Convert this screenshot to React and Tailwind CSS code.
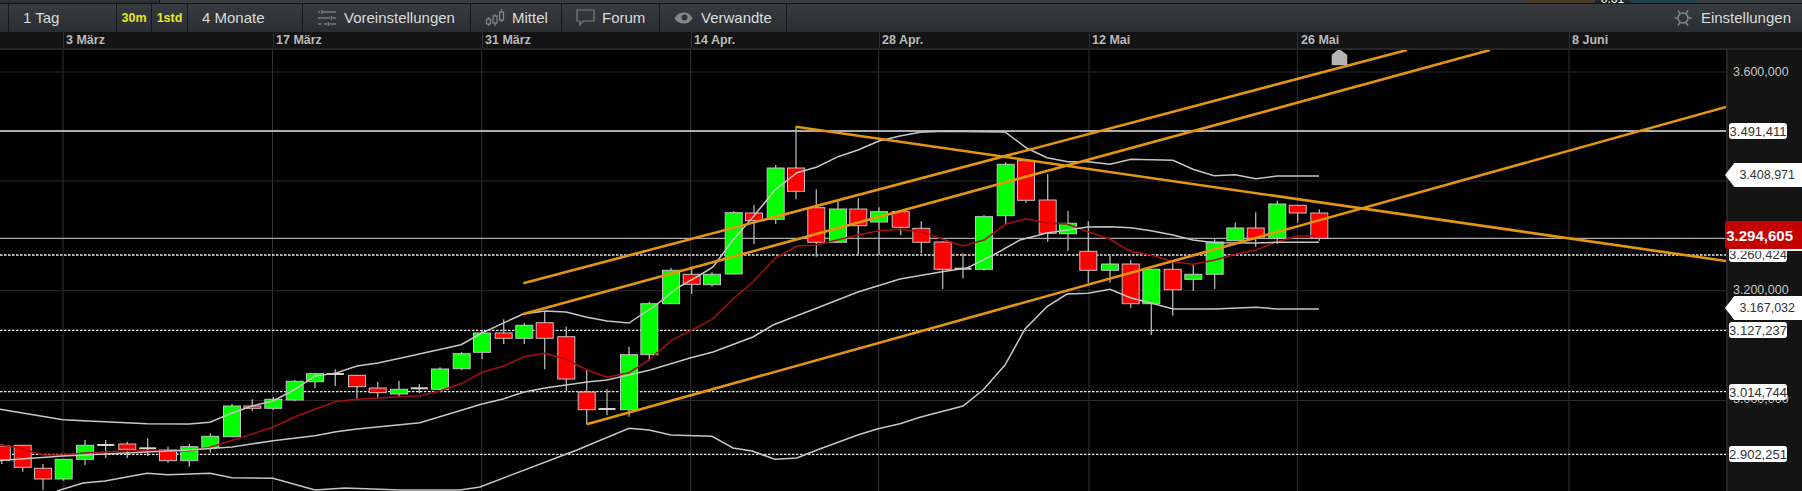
const font = { fontFamily: '"Liberation Sans", Arial, sans-serif' };

// x, high, body top, body bottom, low, type (r = red, g = green, d = doji)
const candles = [
  [1.8, 444, 446, 460, 464, 'r'], [22.7, 445, 445.3, 467.3, 471.7, 'r'], [43, 464, 468.3, 479, 490, 'r'], [63.7, 459, 459.3, 479, 480.7, 'g'],
  [85, 440, 445.3, 459.3, 465, 'g'], [105.7, 440, 445, 445, 458, 'd'], [127.3, 441.7, 444, 449.3, 458, 'r'], [147.7, 438.3, 448.3, 448.3, 456, 'd'],
  [168, 446.7, 450, 460.7, 462.7, 'r'], [189.3, 444, 446.7, 460.7, 466.7, 'g'], [210.3, 433.3, 436.3, 447.3, 452.7, 'g'], [232, 404, 406, 436.7, 437.3, 'g'],
  [252.3, 399.3, 406, 408.3, 410.7, 'r'], [273.3, 397, 399.3, 408.3, 410, 'g'], [294.7, 380, 381.3, 400, 401.3, 'g'], [315, 372.7, 373.7, 381.7, 388.3, 'g'],
  [335.3, 369.3, 374, 374, 386, 'd'], [357, 375, 375.3, 386.7, 399.3, 'r'], [377.7, 382, 388, 392.7, 398.3, 'r'], [399, 381, 389.3, 394, 396.7, 'g'],
  [419.3, 384, 388.3, 388.3, 393.3, 'd'], [440, 367.3, 369, 389.3, 390, 'g'], [461.7, 352, 353.7, 368.7, 370.3, 'g'], [482, 330, 333, 352.3, 359.3, 'g'],
  [503.7, 319.3, 333, 338.3, 344, 'r'], [524.3, 322.7, 325.3, 338.3, 344, 'g'], [544.7, 311.7, 322.7, 338.3, 369.3, 'r'], [566.3, 326.7, 336.7, 379, 391.7, 'r'],
  [586.7, 369.3, 392, 409.7, 424.3, 'r'], [607, 389.3, 409, 409, 415.3, 'd'], [629, 346.7, 354.7, 409.7, 416.7, 'g'], [649.3, 302, 303.7, 354.7, 360.7, 'g'],
  [671, 267.7, 270.3, 303.7, 304, 'g'], [691.7, 266.7, 274.3, 284.3, 294, 'r'], [712, 272.3, 274.3, 284.7, 286.7, 'g'], [733.7, 211, 212.7, 274, 274.5, 'g'],
  [754, 205, 213, 220.7, 244, 'r'], [775.7, 165, 168, 219.3, 224, 'g'], [796, 126.7, 168, 191.3, 199.3, 'r'], [816.3, 189.3, 207.7, 242.3, 256.7, 'r'],
  [838, 200.7, 209, 242.3, 242.5, 'g'], [858.3, 198.3, 209, 225.7, 255, 'r'], [879, 207.3, 211.7, 222, 255, 'g'], [900.7, 211, 211.7, 227.3, 235.3, 'r'],
  [921.3, 221.3, 228.3, 242.3, 253.3, 'r'], [942.7, 241, 242, 269.3, 289, 'r'], [963, 253.3, 268.7, 268.7, 278.3, 'd'], [984, 215, 216.7, 269.3, 270.7, 'g'],
  [1005.7, 162.3, 164.3, 215.7, 225, 'g'], [1026, 159.5, 160.7, 200.3, 202.7, 'r'], [1047.7, 174, 200, 233.3, 241.7, 'r'], [1068, 211, 223.3, 233.7, 250.7, 'g'],
  [1088.3, 221.3, 251.3, 270.3, 283.3, 'r'], [1110, 255.7, 264, 270.3, 282.7, 'g'], [1130.7, 260, 264, 303.7, 308, 'r'], [1151.3, 269, 269.3, 303.7, 335, 'g'],
  [1172.7, 263.3, 269.3, 289.7, 315.7, 'r'], [1193.3, 265, 274.3, 279.3, 291, 'g'], [1214.7, 239.3, 242, 274.3, 289, 'g'], [1235.3, 222.7, 228, 240.7, 241, 'g'],
  [1255.7, 212.3, 228, 238.3, 246.7, 'r'], [1277.3, 200.7, 204, 238.3, 244, 'g'], [1297.7, 205, 205.3, 213, 222.7, 'r'], [1319.3, 209.3, 213, 238.3, 240.7, 'r'],
];

const upperBand = '0,409.3 63,419.7 147,423.7 189,424 210,422.3 232,413 252,406 273,401 294,390 315,376 335,373.3 357,366 378,363 400,358.3 461,344.7 482,333 523,314 545,311 566,312 587,317.3 607,321 629,323 656,305 677,288 700,275 713,267 733,240 753,217 775,190 797,172.7 817,167 838,156.7 858,150 879,141 900,136 920,132.3 943,131.3 1005,132 1027,148.3 1047,157.7 1068,161.7 1088,161.7 1110,164.3 1131,159.3 1173,160.3 1193,169.3 1214,175.7 1235,174.7 1256,178.7 1277,176 1319,176';
const middleBand = '0,460.5 63,456 189,450 232,447 273,440.7 315,435.7 336,431.7 357,429 400,424.7 420,422.7 482,404 503,399 524,392 545,388 587,382 607,380 650,370 690,358 713,352 753,337 773,325 817,308 858,292 900,279 942,271.7 967,268 992,255.7 1020,240 1047,233 1067,230 1088,227 1110,226.7 1131,227.7 1151,230.7 1173,235 1193,240 1215,242.7 1256,243 1277,242.3 1319,242.3';
const lowerBand = '57,491 83,483 105,481 147,473.3 168,474.7 210,473.3 232,477.7 273,478.3 315,490 345,488 400,490 460,490 480,487 577,450 629,428.3 649,430 671,435 712,436.3 733,448 752,451 775,459.3 797,458 817,450 857,435.3 878,428.7 900,423.7 920,417.3 963,406 983,390 1005,365 1025,329 1047,306.7 1067,294 1088,293.3 1110,289.3 1131,298 1151,303 1173,309 1214,309 1256,307.3 1277,309 1319,309';
const redAverage = '0,445 14,446.7 43,455 64,455 85,453 127,450.7 189,450.7 210,447.3 273,427.3 295,416.7 335,401.7 357,399.3 400,396.7 420,395.7 440,391 462,383.3 482,372.3 504,366 524,356.7 545,353.3 566,359.3 587,370 607,377.3 629,372.7 649,360 671,340.7 692,330 712,319.3 734,298.3 753,281.7 775,258.3 797,246 816,245 858,235 879,230.7 900.7,229.3 921,231.7 943,239.3 963,246 984,240 1006,224 1026,218.7 1048,223.3 1067,224 1088,231.7 1110,239.3 1131,251.7 1151,255 1173,261.7 1193,264.3 1215,260 1235,254.3 1256,250 1277,241.7 1298,236 1319,236';

const orangeLines = [
  [586.7, 424.3, 1726, 107],
  [523.3, 314, 1490, 50],
  [523.3, 283.3, 1407, 50],
  [795.7, 126.7, 1726, 261],
];

const gridX = [63, 272.5, 481.7, 690.7, 878.7, 1089, 1297.3, 1569];
const gridY = [72, 181, 290.7, 400.5];
const dottedY = [255, 330.4, 391.7, 454.4];

const dates = [
  ['3 März', 'left-[66px]'], ['17 März', 'left-[276px]'], ['31 März', 'left-[485px]'], ['14 Apr.', 'left-[694px]'],
  ['28 Apr.', 'left-[882px]'], ['12 Mai', 'left-[1092px]'], ['26 Mai', 'left-[1301px]'], ['8 Juni', 'left-[1572px]'],
];

function Candle({ c }) {
  const [x, hi, top, bot, lo, type] = c;
  if (type === 'd') {
    return (
      <g>
        <line x1={x} x2={x} y1={hi} y2={lo} stroke="#b5b5b5" strokeWidth="1.3" />
        <line x1={x - 8.5} x2={x + 8.5} y1={top} y2={top} stroke="#d5d5d5" strokeWidth="2" />
      </g>
    );
  }
  return (
    <g>
      <line x1={x} x2={x} y1={hi} y2={lo} stroke="#b5b5b5" strokeWidth="1.3" />
      <rect x={x - 8.5} y={top} width="17" height={bot - top} fill={type === 'g' ? '#00ff00' : '#ff0000'} stroke="#c4c4c4" strokeWidth="1" />
    </g>
  );
}

function SlidersIcon() {
  return (
    <svg width="20" height="18" viewBox="0 0 20 18" fill="none" stroke="#77797b" strokeWidth="1.6">
      <path d="M1 3h2M6 3h13M5 1v4M1 9h12M16 9h3M14.500 7v4M1 15h3M7 15h3M13 15h6M11.500 13v4" />
    </svg>
  );
}

function CandlesIcon() {
  return (
    <svg width="20" height="20" viewBox="0 0 20 20" fill="none" stroke="#85888a" strokeWidth="1.2">
      <path d="M3.500 9v2M3.500 16v2M10 6v2M10 15v3M16.500 1v3M16.500 12v2" />
      <rect x="1.500" y="11" width="4" height="5" />
      <rect x="8" y="8" width="4" height="7" />
      <rect x="14.500" y="4" width="4" height="8" />
    </svg>
  );
}

function BubbleIcon() {
  return (
    <svg width="19" height="18" viewBox="0 0 19 18" fill="none" stroke="#7d8082" strokeWidth="1.2">
      <path d="M1 1h17v11H7l-3 4v-4H1z" />
    </svg>
  );
}

function EyeIcon() {
  return (
    <svg width="19" height="12" viewBox="0 0 19 12">
      <path d="M0.500 6.500C3 1.500 7 0.500 10 0.500c4 0 7 2.500 8.500 5.500-2 4-5 5.500-8.500 5.500-4 0-7.500-1.500-9.500-5z" fill="#85888a" />
      <circle cx="10.500" cy="5.500" r="3" fill="#2f3337" />
    </svg>
  );
}

function GearIcon() {
  return (
    <svg width="18" height="18" viewBox="0 0 18 18" fill="none" stroke="#85888a" strokeWidth="1.5">
      <circle cx="9" cy="9" r="5" />
      <path d="M0.500 9h3M14.500 9h3M4 1.500l2 3M14 1.500l-2 3M4 16.500l2-3M14 16.500l-2-3" />
    </svg>
  );
}

function ToolItem({ className, children }) {
  return <div className={`flex h-full items-center border-r border-[#15181a] ${className}`}>{children}</div>;
}

function Pill({ className, text }) {
  return (
    <div className={`absolute left-[1px] flex h-[16px] w-[58px] items-center justify-center rounded-[3px] bg-white text-[13px] leading-none text-[#333] ${className}`}>
      {text}
    </div>
  );
}

function ArrowLabel({ className, text }) {
  return (
    <div className={`absolute left-[-3px] flex h-[24px] w-[78px] items-center justify-end bg-white pr-[8px] text-[12.5px] leading-none text-[#333] [clip-path:polygon(0_50%,12%_0,100%_0,100%_100%,12%_100%)] ${className}`}>
      {text}
    </div>
  );
}

function AxisText({ className, text }) {
  return <div className={`absolute left-[5px] text-[12.5px] leading-none text-[#c4c4c4] ${className}`}>{text}</div>;
}

export default function App() {
  return (
    <div className="flex h-[491px] w-[1802px] flex-col overflow-hidden bg-black" style={font}>
      {/* clipped row above the toolbar */}
      <div className="flex h-[4px] border-b border-[#111] bg-[#3c3f42]">
        <div className="w-[160px] border-r border-[#111] bg-[#2f3235]" />
        <div className="ml-[1365px] w-[68px] bg-[#4b3b22]" />
        <div className="w-[2px]" />
        <div className="flex w-[35px] items-end justify-center overflow-hidden bg-[#24282b] text-[12px] leading-[8px] text-white">0,61</div>
        <div className="w-[68px] bg-[#1c4551]" />
      </div>

      <div className="flex h-[28px] items-center bg-gradient-to-b from-[#383c40] to-[#2a2e32] text-[15px] text-[#d9dcdc]">
        <ToolItem className="w-[9px]" />
        <ToolItem className="w-[108px] pl-[14px]">1 Tag</ToolItem>
        <ToolItem className="w-[35px] justify-center text-[12.5px] font-bold text-[#e8e81a]">30m</ToolItem>
        <ToolItem className="w-[36px] justify-center text-[12.5px] font-bold text-[#e8e81a]">1std</ToolItem>
        <ToolItem className="w-[115px] pl-[14px]">4 Monate</ToolItem>
        <ToolItem className="w-[168px] gap-[7px] pl-[14px]"><SlidersIcon />Voreinstellungen</ToolItem>
        <ToolItem className="w-[91px] gap-[7px] pl-[14px]"><CandlesIcon />Mittel</ToolItem>
        <ToolItem className="w-[98px] gap-[7px] pl-[14px]"><BubbleIcon />Forum</ToolItem>
        <ToolItem className="w-[127px] gap-[8px] pl-[14px]"><EyeIcon />Verwandte</ToolItem>
        <div className="ml-auto flex items-center gap-[9px] pr-[11px]">
          <GearIcon />
          Einstellungen
        </div>
      </div>

      <div className="relative h-[18px] border-b-2 border-[#262626] bg-[#141414]">
        {gridX.map((x) => (
          <div key={x} className="absolute top-0 h-full w-px bg-[#2f2f2f]" style={{ left: x }} />
        ))}
        {dates.map(([label, left]) => (
          <div key={label} className={`absolute top-[2px] text-[12.5px] font-bold leading-[13px] text-[#b9b9b9] ${left}`}>{label}</div>
        ))}
      </div>

      <div className="flex flex-1">
        <svg width="1726" height="441" viewBox="0 50 1726 441" className="block shrink-0">
          <rect x="0" y="50" width="1726" height="441" fill="#000" />
          {gridX.map((x) => <line key={x} x1={x} x2={x} y1="50" y2="491" stroke="#303030" strokeWidth="1" />)}
          {gridY.map((y) => <line key={y} x1="0" x2="1726" y1={y} y2={y} stroke="#2a2a2a" strokeWidth="1" />)}
          <line x1="0" x2="1726" y1="131" y2="131" stroke="#e6e6e6" strokeWidth="1.3" />
          <line x1="0" x2="1726" y1="238.300" y2="238.300" stroke="#a8a8a8" strokeWidth="1.3" />
          {dottedY.map((y) => <line key={y} x1="0" x2="1726" y1={y} y2={y} stroke="#f0f0f0" strokeWidth="1.300" strokeDasharray="2.500 1.500" />)}
          {candles.map((c) => <Candle key={c[0]} c={c} />)}
          <polyline points={redAverage} fill="none" stroke="#a80f0f" strokeWidth="1.500" />
          <polyline points={upperBand} fill="none" stroke="#c6c6c6" strokeWidth="1.500" />
          <polyline points={middleBand} fill="none" stroke="#c6c6c6" strokeWidth="1.500" />
          <polyline points={lowerBand} fill="none" stroke="#c6c6c6" strokeWidth="1.500" />
          {orangeLines.map((l) => (
            <line key={l[1]} x1={l[0]} y1={l[1]} x2={l[2]} y2={l[3]} stroke="#e4960f" strokeWidth="2.600" />
          ))}
          <path d="M1339 48.700 L1347.300 55 V65.300 H1331.700 V55 Z" fill="#b4b4b4" />
        </svg>

        <div className="relative flex-1 border-l-2 border-[#262626] bg-[#141414]">
          <AxisText className="top-[16px]" text="3.600,000" />
          <Pill className="top-[73px]" text="3.491,411" />
          <ArrowLabel className="top-[113px]" text="3.408,971" />
          <Pill className="top-[196px]" text="3.260,424" />
          <div className="absolute left-[3px] top-[197px] h-[4px] w-[73px] bg-white" />
          <div className="absolute left-[-3px] top-[171px] flex h-[28px] w-[77px] items-center justify-end rounded-l-[3px] bg-[#c40000] pr-[9px] text-[15px] font-bold leading-none text-white">3.294,605</div>
          <AxisText className="top-[234px]" text="3.200,000" />
          <ArrowLabel className="top-[246px]" text="3.167,032" />
          <Pill className="top-[272px]" text="3.127,237" />
          <AxisText className="top-[343px]" text="3.000,000" />
          <Pill className="top-[334px]" text="3.014,744" />
          <Pill className="top-[396px]" text="2.902,251" />
        </div>
      </div>
    </div>
  );
}
